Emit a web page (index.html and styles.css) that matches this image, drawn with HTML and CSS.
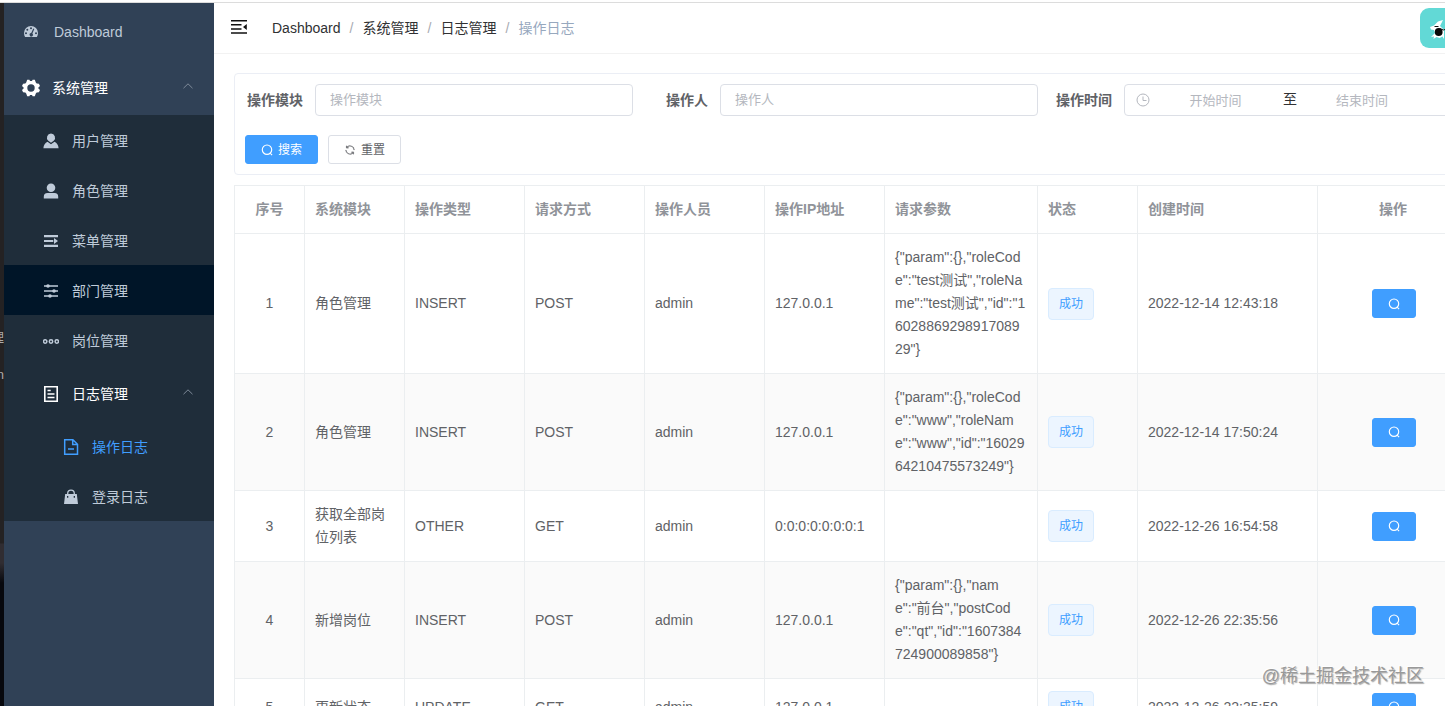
FILE: index.html
```html
<!DOCTYPE html>
<html lang="zh-CN">
<head>
<meta charset="utf-8">
<title>操作日志</title>
<link rel="stylesheet" href="styles.css">
</head>
<body>
<svg class="defs" aria-hidden="true">
  <symbol id="search" viewBox="0 0 12 12"><path fill="none" stroke="currentColor" stroke-width="1.150" d="M6 1a4.700 4.700 0 1 0 0 9.400A4.700 4.700 0 0 0 6 1zM9.200 9.200l1.900 1.900"/></symbol>
  <symbol id="refresh" viewBox="0 0 1024 1024"><path fill="currentColor" stroke="currentColor" stroke-width="16" d="M771.776 794.88A384 384 0 0 1 128 512h64a320 320 0 0 0 555.712 216.448H654.72a32 32 0 1 1 0-64h149.056a32 32 0 0 1 32 32v148.928a32 32 0 1 1-64 0v-50.56zM276.288 295.616h92.992a32 32 0 0 1 0 64H220.16a32 32 0 0 1-32-32V178.56a32 32 0 0 1 64 0v50.56A384 384 0 0 1 896.128 512h-64a320 320 0 0 0-555.776-216.384z"/></symbol>
  <symbol id="up" viewBox="0 0 12 12"><path d="M1.500 8.200 6 3.800l4.500 4.400" fill="none" stroke="currentColor"/></symbol>
</svg>
<div class="topline"></div>
<div class="app">
  <div class="strip"><span class="strip-a">理</span><span class="strip-b">n</span></div>
  <nav class="sidebar">
    <a class="item top"><svg class="ic" viewBox="0 0 16 16"><path fill="currentColor" fill-rule="evenodd" d="M8 2a7 7 0 0 0-7 7c0 1.500.4 2.900 1.100 4h11.800A7.500 7.500 0 0 0 15 9a7 7 0 0 0-7-7zM8 3.200a1 1 0 1 1 0 2 1 1 0 0 1 0-2zM4.300 4.700a1 1 0 1 1 0 2 1 1 0 0 1 0-2zM3 8.200a1 1 0 1 1 0 2 1 1 0 0 1 0-2zm10 0a1 1 0 1 1 0 2 1 1 0 0 1 0-2zM10.300 4.500l1 .4-1.900 4.600a1.700 1.700 0 1 1-1.200-.4z"/></svg><span class="dash">Dashboard</span></a>
    <a class="item top open"><svg class="ic gear" viewBox="0 0 18 18"><path fill="currentColor" fill-rule="evenodd" d="M5.200.8h2.200L8 2h2l.6-1.200h2.200l1 2.800.9.900 2.200.2 1.100 2.300-1.600 1.400v1.200L18 11l-1.100 2.300-2.200.2-.9.900-1 2.800h-2.200L10 16H8l-.6 1.200H5.200l-1-2.800-.9-.9-2.200-.2L0 11l1.600-1.400V8.400L0 7l1.100-2.300 2.200-.2.900-.9zM9 5.300a3.700 3.700 0 1 0 0 7.400 3.700 3.700 0 0 0 0-7.400z"/></svg><span>系统管理</span><svg class="arrow"><use href="#up"/></svg></a>
    <div class="submenu">
      <a class="item"><svg class="ic" viewBox="0 0 16 16"><path fill="currentColor" d="M8 .5a4.200 4.200 0 0 1 2.700 7.300L8 9.800 5.300 7.800A4.200 4.200 0 0 1 8 .5zM4.500 8.700 8 11.200l3.500-2.500c2.300 1 3.900 3.400 4.100 6.600H.4c.2-3.200 1.800-5.600 4.100-6.600z"/></svg><span>用户管理</span></a>
      <a class="item"><svg class="ic" viewBox="0 0 16 16"><path fill="currentColor" d="M8 .5a4.300 4.300 0 1 1 0 8.600A4.300 4.300 0 0 1 8 .5zM4.500 10h7a3.700 3.700 0 0 1 3.700 3.700v1.700H.8v-1.700A3.700 3.700 0 0 1 4.500 10z"/></svg><span>角色管理</span></a>
      <a class="item"><svg class="ic" viewBox="0 0 16 16"><path fill="currentColor" d="M1 2h14v2.200H1zM1 6.900h9.300v2.200H1zM1 11.800h14V14H1zM11 5l4 3-4 3z"/></svg><span>菜单管理</span></a>
      <a class="item current"><svg class="ic" viewBox="0 0 16 16"><g fill="currentColor"><path d="M1 2.300h14v1.400H1zM1 7.300h14v1.400H1zM1 12.300h14v1.400H1z"/><circle cx="5" cy="3" r="1.800"/><circle cx="11" cy="8" r="1.800"/><circle cx="7" cy="13" r="1.800"/></g></svg><span>部门管理</span></a>
      <a class="item"><svg class="ic" viewBox="0 0 16 16"><g fill="none" stroke="currentColor" stroke-width="1.500"><circle cx="2.200" cy="8.500" r="1.700"/><circle cx="8" cy="8.500" r="1.700"/><circle cx="13.800" cy="8.500" r="1.700"/></g></svg><span>岗位管理</span></a>
      <a class="item open tall"><svg class="ic big" viewBox="0 0 18 18"><path fill="none" stroke="currentColor" stroke-width="1.600" d="M2.800 1.800h12.400v14.400H2.800zM5.500 5.500h3.200M5.500 9h7M5.500 12.500h7"/></svg><span>日志管理</span><svg class="arrow"><use href="#up"/></svg></a>
      <a class="item deep active"><svg class="ic big" viewBox="0 0 18 18"><path fill="none" stroke="currentColor" stroke-width="1.500" d="M2.700 1.700h8.200l4.600 4.600v10H2.700zM10.700 2v4.500h4.600M6 11h6"/></svg><span>操作日志</span></a>
      <a class="item deep"><svg class="ic" viewBox="0 0 16 16"><path fill="currentColor" d="M2.200 5h11.600L15 15H1zM4 7v1.700h1.300V7zm6.700 0v1.700H12V7z" fill-rule="evenodd"/><path fill="none" stroke="currentColor" stroke-width="1.300" d="M4.700 5.500V4.500a3.300 3.300 0 0 1 6.600 0v1"/></svg><span>登录日志</span></a>
    </div>
  </nav>
  <main class="main">
    <header class="header">
      <svg class="fold" viewBox="0 0 16 16"><path fill="currentColor" d="M0 1h16v1.500H0zM0 5.100h10.500v1.500H0zM0 9.200h10.500v1.500H0zM0 13.300h16v1.500H0zM15.800 5v6L12 8z"/></svg>
      <div class="crumbs"><span>Dashboard</span><i>/</i><span>系统管理</span><i>/</i><span>日志管理</span><i>/</i><span class="last">操作日志</span></div>
      <svg class="avatar" viewBox="0 0 40 40"><rect width="40" height="40" rx="9" fill="#62d9d6"/><path fill="#fff" d="M23 12l-5 1.500-4 4-4 1.500 1 2.500 3 .5 1 3-4 4 3-.5-.5 2.500 3-2 3 1 3-1.500 1.500 2.500V22l-4-4z"/><circle cx="18.700" cy="24" r="3.900" fill="#080808"/><path d="M14.500 18.500h4M19.500 20.500l4 1.500 3-1" fill="none" stroke="#111"/></svg>
    </header>
    <section class="filters">
      <div class="fields">
        <label class="l1">操作模块</label><div class="input">操作模块</div>
        <label class="l2">操作人</label><div class="input">操作人</div>
        <label class="l3">操作时间</label>
        <div class="input range"><svg class="clock" viewBox="0 0 14 14"><g fill="none" stroke="currentColor"><circle cx="7" cy="7" r="6"/><path d="M7 3.500V7.500h3.500"/></g></svg><span class="ph">开始时间</span><span class="to">至</span><span class="ph">结束时间</span></div>
      </div>
      <div class="buttons"><button class="btn primary"><svg><use href="#search"/></svg>搜索</button><button class="btn"><svg><use href="#refresh"/></svg>重置</button></div>
    </section>
    <section class="table">
      <div class="row head"><div>序号</div><div>系统模块</div><div>操作类型</div><div>请求方式</div><div>操作人员</div><div>操作IP地址</div><div>请求参数</div><div>状态</div><div>创建时间</div><div>操作</div></div>
      <div class="row"><div>1</div><div>角色管理</div><div>INSERT</div><div>POST</div><div>admin</div><div>127.0.0.1</div><div>{"param":{},"roleCod<br>e":"test测试","roleNa<br>me":"test测试","id":"1<br>6028869298917089<br>29"}</div><div><span class="tag">成功</span></div><div>2022-12-14 12:43:18</div><div><button class="btn primary view"><svg><use href="#search"/></svg></button></div></div>
      <div class="row odd"><div>2</div><div>角色管理</div><div>INSERT</div><div>POST</div><div>admin</div><div>127.0.0.1</div><div>{"param":{},"roleCod<br>e":"www","roleNam<br>e":"www","id":"16029<br>64210475573249"}</div><div><span class="tag">成功</span></div><div>2022-12-14 17:50:24</div><div><button class="btn primary view"><svg><use href="#search"/></svg></button></div></div>
      <div class="row"><div>3</div><div>获取全部岗<br>位列表</div><div>OTHER</div><div>GET</div><div>admin</div><div>0:0:0:0:0:0:0:1</div><div></div><div><span class="tag">成功</span></div><div>2022-12-26 16:54:58</div><div><button class="btn primary view"><svg><use href="#search"/></svg></button></div></div>
      <div class="row odd"><div>4</div><div>新增岗位</div><div>INSERT</div><div>POST</div><div>admin</div><div>127.0.0.1</div><div>{"param":{},"nam<br>e":"前台","postCod<br>e":"qt","id":"1607384<br>724900089858"}</div><div><span class="tag">成功</span></div><div>2022-12-26 22:35:56</div><div><button class="btn primary view"><svg><use href="#search"/></svg></button></div></div>
      <div class="row"><div>5</div><div>更新状态</div><div>UPDATE</div><div>GET</div><div>admin</div><div>127.0.0.1</div><div></div><div><span class="tag">成功</span></div><div>2022-12-26 22:35:59</div><div><button class="btn primary view"><svg><use href="#search"/></svg></button></div></div>
    </section>
  </main>
</div>
<div class="watermark">@稀土掘金技术社区</div>
</body>
</html>
```
FILE: styles.css
```css
* { box-sizing: border-box; }
body {
  margin: 0;
  height: 706px;
  overflow: hidden;
  background: #fff;
  color: #606266;
  font: 14px/23px "Liberation Sans", "Noto Sans CJK SC", sans-serif;
}
.defs { display: none; }
.topline { height: 3px; border-bottom: 1px solid #dcdcdc; }
.app { display: flex; height: 703px; }

.strip {
  width: 4px;
  flex: none;
  overflow: hidden;
  padding-top: 323px;
  background: linear-gradient(#242223 0, #242223 540px, #302d32 541px, #302d32 560px, #07080d 580px);
  color: #aaa;
  font-size: 13px;
}
.strip span { display: flex; justify-content: flex-end; height: 37px; }

.sidebar { width: 210px; flex: none; background: #304156; }
.submenu { background: #1f2d3a; }
.item {
  display: flex;
  align-items: center;
  height: 50px;
  padding: 2px 20px 0 39px;
  color: #bfcbd9;
}
.item.top { height: 56px; padding-left: 19px; }
.item.tall { height: 56px; }
.item.deep { padding-left: 59px; }
.item.current { background: #001528; }
.item.open { color: #fff; }
.item.active { color: #409eff; }
.ic { width: 16px; height: 16px; margin-right: 13px; flex: none; }
.ic.gear { width: 18px; height: 18px; margin: 0 12px 0 -1px; }
.ic.big { width: 18px; height: 18px; margin: 0 12px 0 -1px; }
.dash { margin-left: 2px; }
.arrow { width: 12px; height: 12px; margin: -4px 0 0 auto; color: #7e8a99; }

.main { flex: 1; min-width: 0; overflow: hidden; }
.header {
  display: flex;
  align-items: center;
  height: 51px;
  padding-left: 17px;
  border-bottom: 1px solid #f2f2f2;
  color: #303133;
}
.fold { width: 16px; height: 16px; margin: -2px 25px 0 0; color: #111; }
.crumbs { display: flex; white-space: nowrap; }
.crumbs i { width: 4px; margin: 0 9px; font-style: normal; color: #a8abb2; }
.crumbs .last { color: #97a8be; }
.avatar { width: 40px; height: 40px; margin: 0 -15px 0 auto; flex: none; }

.filters {
  width: 1300px;
  height: 102px;
  margin: 19px 0 10px 20px;
  padding: 10px;
  border: 1px solid #ebeef5;
  border-radius: 4px;
}
.fields { display: flex; align-items: center; height: 32px; }
.fields label { font-weight: 700; flex: none; }
.l1 { width: 70px; padding-left: 2px; }
.l2 { width: 87px; padding-left: 33px; }
.l3 { width: 86px; padding-left: 18px; }
.input {
  display: flex;
  align-items: center;
  width: 318px;
  height: 32px;
  flex: none;
  padding: 0 14px 1px;
  border: 1px solid #dcdfe6;
  border-radius: 4px;
  color: #b4b7be;
  font-size: 13px;
}
.range { width: 350px; padding: 0 11px 1px; }
.clock { width: 14px; height: 14px; }
.ph { width: 122px; padding-top: 2px; text-align: center; }
.to { width: 18px; color: #303133; font-size: 14px; text-align: center; }
.clock + .ph { width: 131px; }
.to + .ph { width: 126px; }

.buttons { display: flex; gap: 10px; margin-top: 19px; }
.btn {
  display: flex;
  align-items: center;
  justify-content: center;
  gap: 5px;
  width: 73px;
  height: 29px;
  padding: 0;
  border: 1px solid #dcdfe6;
  border-radius: 3px;
  background: #fff;
  color: #606266;
  font: 12px/20px "Liberation Sans", "Noto Sans CJK SC", sans-serif;
}
.btn svg { width: 12px; height: 12px; }
.btn.primary { border-color: #409eff; background: #409eff; color: #fff; }
.btn.view { width: 44px; }

.table { width: 1300px; margin-left: 20px; border: 1px solid #ebeef0; border-width: 1px 0 0 1px; }
.row {
  display: grid;
  grid-template-columns: 70px 100px 120px 120px 120px 120px 153px 100px 180px 1fr;
  min-height: 57px;
}
.row > div {
  display: flex;
  align-items: center;
  padding: 12px 10px;
  border: 1px solid #ebeef0;
  border-width: 0 1px 1px 0;
  white-space: nowrap;
}
.row > div:nth-child(8) { padding-top: 0; padding-bottom: 0; }
.row > div:first-child { justify-content: center; }
.row > div:last-child { padding-left: 54px; }
.row.head { min-height: 0; height: 48px; color: #909399; font-weight: 700; }
.row.head > div:last-child { padding-left: 61px; }
.row.odd { background: #fafafa; }
.tag {
  width: 46px;
  height: 32px;
  border: 1px solid #d9ecff;
  border-radius: 4px;
  background: #ecf5ff;
  color: #409eff;
  font-size: 12px;
  line-height: 30px;
  text-align: center;
}

.watermark {
  position: absolute;
  right: 21px;
  bottom: 16px;
  color: #999;
  font-size: 18px;
  line-height: 27px;
  text-shadow: -1px -1px 1px #fff, 1px 1px 1px #aaa;
}
```
